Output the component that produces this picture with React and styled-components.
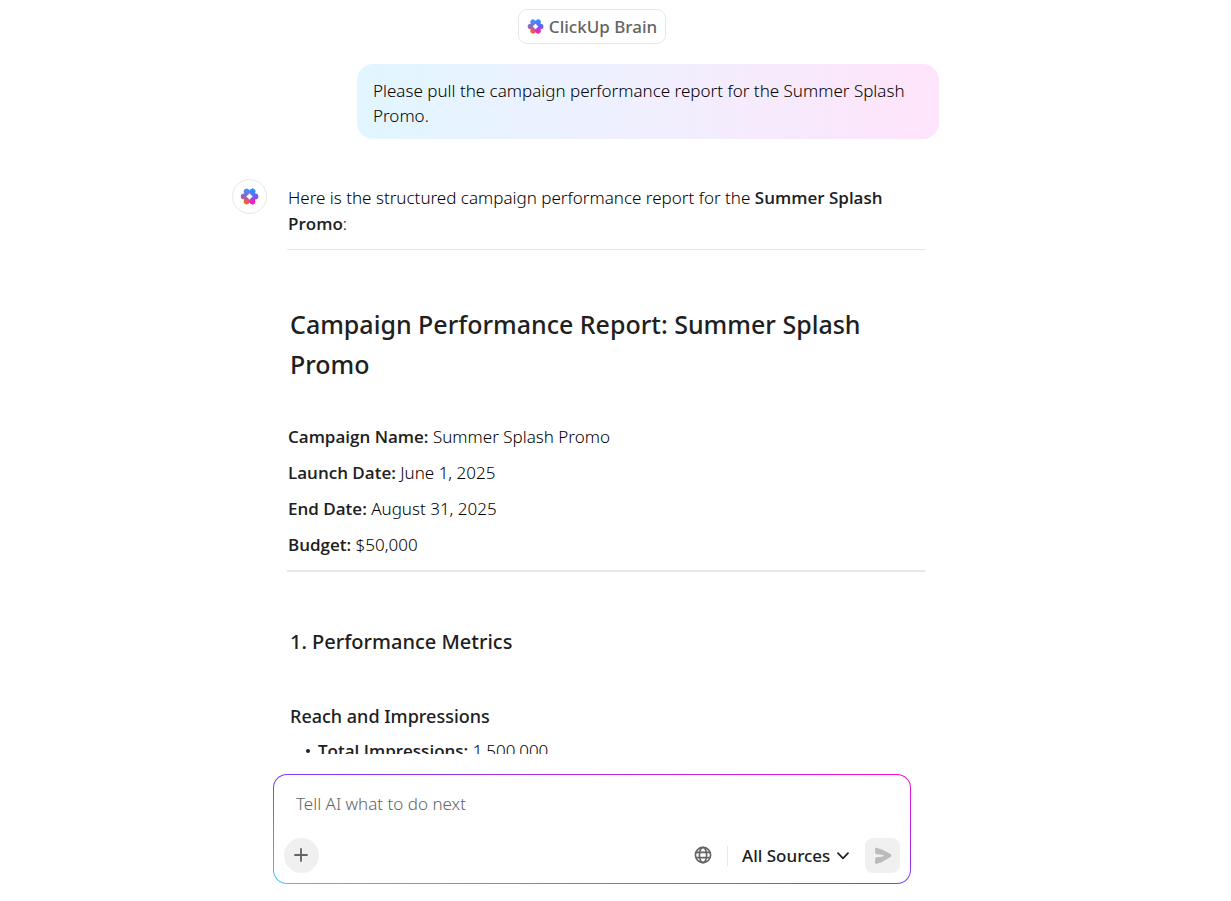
import React, { useId } from "react";
import styled, { createGlobalStyle } from "styled-components";

const GlobalStyle = createGlobalStyle`
  *, *::before, *::after { box-sizing: border-box; }
  body {
    margin: 0;
    background: #fff;
    color: #202020;
    font-family: "Noto Sans", "Open Sans", sans-serif;
    font-size: 17px;
    line-height: 26px;
  }
  h1, h2, h3, p, ul { margin: 0; padding: 0; }
  button, select, textarea { font: inherit; color: inherit; }
`;

const Page = styled.main`
  display: flex;
  flex-direction: column;
  align-items: center;
  height: 100vh;
  padding: 9px 47px 17px 0;
`;

const Shell = styled.div`
  display: flex;
  flex-direction: column;
  flex: 1;
  min-height: 0;
  width: 100%;
  max-width: 720px;
`;

const BrandChip = styled.button`
  display: flex;
  align-items: center;
  align-self: center;
  flex: none;
  gap: 5px;
  height: 35px;
  padding: 0 8px;
  border: 1px solid #e8e8e8;
  border-radius: 9px;
  background: #fff;
  color: #646464;
  font-weight: 500;
`;

const Thread = styled.div`
  flex: 1;
  min-height: 0;
  overflow: hidden;
  padding: 20px 13px 0 0;
`;

const UserMessage = styled.p`
  max-width: 582px;
  margin-left: auto;
  padding: 14px 16px 11px;
  border-radius: 16px;
  background: linear-gradient(90deg, #e1f6fe, #f0effe 50%, #ffe4fb);
  color: #000;
  font-weight: 300;
  line-height: 25px;
`;

const Reply = styled.article`
  display: flex;
  gap: 20px;
  margin-top: 40px;
  padding-right: 14px;
`;

const Avatar = styled.div`
  display: grid;
  place-items: center;
  flex: none;
  width: 35px;
  height: 35px;
  border: 1px solid #e8e8e8;
  border-radius: 50%;
`;

const ReplyBody = styled.div`
  flex: 1;
  min-width: 0;
  padding-top: 6px;
`;

const Text = styled.p`
  padding-left: 1px;
  color: #000;
  font-weight: 300;
`;

const Strong = styled.strong`
  color: #202020;
  font-family: "Open Sans", sans-serif;
  font-weight: 600;
`;

const Rule = styled.hr`
  height: ${(p) => p.$size}px;
  margin: 12px 0 0;
  border: 0;
  background: #e8e8e8;
`;

const Title = styled.h1`
  padding: 54px 0 0 3px;
  font-size: 25px;
  font-weight: 500;
  line-height: 40px;
`;

const Facts = styled.div`
  display: flex;
  flex-direction: column;
  gap: 10px;
  padding-top: 40px;
`;

const SectionTitle = styled.h2`
  padding: 54px 0 0 3px;
  font-size: 20px;
  font-weight: 500;
  line-height: 32px;
`;

const SubTitle = styled.h3`
  padding: 44px 0 0 3px;
  font-size: 18px;
  font-weight: 500;
  line-height: 28px;
`;

const List = styled.ul`
  padding-top: 8px;
  list-style: none;
`;

const Item = styled.li`
  display: flex;
  align-items: center;
  gap: 8px;
  padding-left: 19px;
  color: #000;
  font-weight: 300;

  &::before {
    content: "";
    width: 4px;
    height: 4px;
    border-radius: 50%;
    background: #202020;
  }
`;

const Composer = styled.form`
  display: flex;
  flex-direction: column;
  flex: none;
  height: 110px;
  margin: 20px 41px 0;
  padding: 16px 10px 10px;
  border: 1px solid transparent;
  border-radius: 14px;
  background:
    linear-gradient(#fff, #fff) padding-box,
    linear-gradient(to top right, #40c8f4, #7b3ff2 50%, #f80fd8) border-box;
`;

const Prompt = styled.textarea`
  flex: 1;
  width: 100%;
  padding: 0 12px;
  border: 0;
  outline: 0;
  resize: none;
  background: transparent;
  overflow: hidden;
  font-weight: 300;

  &::placeholder { color: #646464; opacity: 1; }
`;

const Toolbar = styled.div`
  display: flex;
  align-items: center;
  height: 35px;
`;

const IconButton = styled.button`
  display: grid;
  place-items: center;
  flex: none;
  width: 35px;
  height: 35px;
  padding: 0;
  border: 0;
  border-radius: ${(p) => p.$radius || "50%"};
  background: ${(p) => (p.$plain ? "transparent" : "#f0f0f0")};
  color: #646464;
`;

const Spacer = styled.div`
  flex: 1;
`;

const Divider = styled.span`
  width: 1px;
  height: 20px;
  margin: 0 14px 0 6px;
  background: #e8e8e8;
`;

const SourcePicker = styled.div`
  display: grid;
  align-items: center;
  margin-right: 16px;

  select {
    grid-area: 1 / 1;
    appearance: none;
    height: 32px;
    padding: 0 18px 0 0;
    border: 0;
    background: transparent;
    font-weight: 500;
  }

  svg {
    grid-area: 1 / 1;
    justify-self: end;
    pointer-events: none;
  }
`;

function BrainLogo({ size }) {
  const id = useId();
  return (
    <svg width={size} height={size} viewBox="0 0 20 20" aria-hidden="true">
      <defs>
        <linearGradient id={id + "a"} x1="0" x2="0" y1="0" y2="1">
          <stop offset="0.15" stopColor="#4a8cff" />
          <stop offset="0.5" stopColor="#8f66b8" />
          <stop offset="0.8" stopColor="#f0603c" />
        </linearGradient>
        <linearGradient id={id + "b"} x1="0" x2="0" y1="0" y2="1">
          <stop offset="0.2" stopColor="#2b92ff" />
          <stop offset="0.5" stopColor="#7458fa" />
          <stop offset="0.8" stopColor="#fa18d0" />
        </linearGradient>
        <linearGradient id={id + "m"} x1="0" x2="1" y1="0" y2="0">
          <stop offset="0.38" stopColor="#000" />
          <stop offset="0.62" stopColor="#fff" />
        </linearGradient>
        <mask id={id + "k"} maskUnits="userSpaceOnUse" x="0" y="0" width="20" height="20">
          <rect width="20" height="20" fill={`url(#${id}m)`} />
        </mask>
        <clipPath id={id + "p"}>
          {[30, 90, 150, 210, 270, 330].map((a) => (
            <ellipse key={a} cx="10" cy="4.7" rx="3.2" ry="3.9" transform={`rotate(${a} 10 10)`} />
          ))}
        </clipPath>
      </defs>
      <g clipPath={`url(#${id}p)`}>
        <rect width="20" height="20" fill={`url(#${id}a)`} />
        <rect width="20" height="20" fill={`url(#${id}b)`} mask={`url(#${id}k)`} />
      </g>
      <path d="M10 7 11.2 8.8 13 10 11.2 11.2 10 13 8.8 11.2 7 10 8.8 8.8Z" fill="#fff" stroke="#fff" strokeLinejoin="round" />
    </svg>
  );
}

const PlusIcon = () => (
  <svg width="15" height="15" viewBox="0 0 15 15" fill="none" stroke="currentColor" strokeWidth="1.8" strokeLinecap="round" aria-hidden="true">
    <path d="M7 1v12M1 7h12" />
  </svg>
);

const GlobeIcon = () => (
  <svg width="19" height="19" viewBox="0 0 19 19" fill="none" stroke="currentColor" strokeWidth="1.6" aria-hidden="true">
    <circle cx="9" cy="9" r="7.6" />
    <ellipse cx="9" cy="9" rx="3.6" ry="7.6" />
    <path d="M1.9 6.4h14.2M1.9 11.6h14.2" />
  </svg>
);

const ChevronIcon = () => (
  <svg width="12" height="8" viewBox="0 0 12 8" fill="none" stroke="currentColor" strokeWidth="1.7" strokeLinecap="round" strokeLinejoin="round" aria-hidden="true">
    <path d="M1 1.2 6 6.3 11 1.2" />
  </svg>
);

const SendIcon = () => (
  <svg width="18" height="18" viewBox="0 0 18 18" aria-hidden="true">
    <path d="M1 2.2C1 1 1.8.5 3 .9L8 2.600 16.500 7Q18.400 8.500 16.500 10L8 14.900 3 16.800C1.800 17.200 1 16.500 1 15.500L1.400 10.600 9 9.400Q10.200 8.700 9 8L1.400 7Z" fill="#bbb" />
  </svg>
);

const facts = [
  ["Campaign Name:", "Summer Splash Promo"],
  ["Launch Date:", "June 1, 2025"],
  ["End Date:", "August 31, 2025"],
  ["Budget:", "$50,000"],
];

export default function App() {
  return (
    <>
      <GlobalStyle />
      <Page>
        <Shell>
          <BrandChip type="button">
            <BrainLogo size={17} />
            ClickUp Brain
          </BrandChip>
          <Thread>
            <UserMessage>
              Please pull the campaign performance report for the Summer Splash Promo.
            </UserMessage>
            <Reply>
              <Avatar>
                <BrainLogo size={19} />
              </Avatar>
              <ReplyBody>
                <Text>
                  Here is the structured campaign performance report for the{" "}
                  <Strong>Summer Splash Promo</Strong>:
                </Text>
                <Rule $size={1} />
                <Title>Campaign Performance Report: Summer Splash Promo</Title>
                <Facts>
                  {facts.map(([label, value]) => (
                    <Text key={label}>
                      <Strong>{label}</Strong> {value}
                    </Text>
                  ))}
                </Facts>
                <Rule $size={2} />
                <SectionTitle>1. Performance Metrics</SectionTitle>
                <SubTitle>Reach and Impressions</SubTitle>
                <List>
                  <Item>
                    <span>
                      <Strong>Total Impressions:</Strong> 1,500,000
                    </span>
                  </Item>
                </List>
              </ReplyBody>
            </Reply>
          </Thread>
          <Composer onSubmit={(e) => e.preventDefault()}>
            <Prompt aria-label="Message" placeholder="Tell AI what to do next" rows={1} />
            <Toolbar>
              <IconButton type="button" aria-label="Add">
                <PlusIcon />
              </IconButton>
              <Spacer />
              <IconButton type="button" aria-label="Search the web" $plain>
                <GlobeIcon />
              </IconButton>
              <Divider />
              <SourcePicker>
                <select aria-label="Sources">
                  <option>All Sources</option>
                </select>
                <ChevronIcon />
              </SourcePicker>
              <IconButton type="submit" aria-label="Send" $radius="8px">
                <SendIcon />
              </IconButton>
            </Toolbar>
          </Composer>
        </Shell>
      </Page>
    </>
  );
}
